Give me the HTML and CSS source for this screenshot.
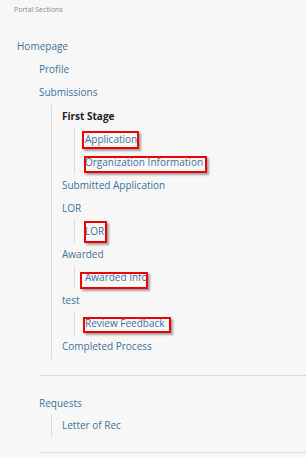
FILE: index.html
```html
<!DOCTYPE html>
<html lang="en">
<head>
    <meta charset="UTF-8">
    <meta name="viewport" content="width=device-width, initial-scale=1.0">
    <title>Portal Sections</title>
    <link rel="stylesheet" href="styles.css">
</head>
<body>
    <div class="sidebar">
        <div class="sidebar-title">Portal Sections</div>
        <ul class="nav">
            <li>
                <a href="#">Homepage</a>
                <ul class="nav-children">
                    <li><a href="#">Profile</a></li>
                    <li>
                        <a href="#">Submissions</a>
                        <ul class="nav-sub nav-sub-main">
                            <li>
                                <span class="nav-heading">First Stage</span>
                                <ul class="nav-sub">
                                    <li><a href="#" class="marked">Application<span class="mark mark-app"></span></a></li>
                                    <li><a href="#" class="marked">Organization Information<span class="mark mark-org"></span></a></li>
                                </ul>
                            </li>
                            <li><a href="#">Submitted Application</a></li>
                            <li>
                                <a href="#">LOR</a>
                                <ul class="nav-sub">
                                    <li><a href="#" class="marked">LOR<span class="mark mark-lor"></span></a></li>
                                </ul>
                            </li>
                            <li>
                                <a href="#">Awarded</a>
                                <ul class="nav-sub">
                                    <li><a href="#" class="marked">Awarded Info<span class="mark mark-awarded"></span></a></li>
                                </ul>
                            </li>
                            <li>
                                <a href="#">test</a>
                                <ul class="nav-sub">
                                    <li><a href="#" class="marked">Review Feedback<span class="mark mark-review"></span></a></li>
                                </ul>
                            </li>
                            <li><a href="#">Completed Process</a></li>
                        </ul>
                    </li>
                    <li class="divider"></li>
                    <li>
                        <a href="#">Requests</a>
                        <ul class="nav-sub nav-sub-requests">
                            <li><a href="#">Letter of Rec</a></li>
                        </ul>
                    </li>
                    <li class="divider divider-last"></li>
                </ul>
            </li>
        </ul>
    </div>
</body>
</html>
```

FILE: styles.css
```css
* {
    margin: 0;
    padding: 0;
    box-sizing: border-box;
}

body {
    background-color: #f7f7f7;
    font-family: "Open Sans", Arial, sans-serif;
    font-size: 10px;
    color: #41729c;
}

.sidebar {
    padding-top: 4px;
}

.sidebar-title {
    padding-left: 14px;
    font-size: 7px;
    line-height: 12px;
    color: #8a8a8a;
    height: 31px;
}

ul {
    list-style: none;
}

.nav {
    padding-left: 17px;
}

.nav a,
.nav-heading {
    display: inline-block;
    line-height: 23px;
    color: #41729c;
    text-decoration: none;
}

.nav-heading {
    font-weight: bold;
    color: #222;
}

.nav-children {
    padding-left: 22px;
}

.nav-sub {
    margin-left: 12px;
    padding-left: 10px;
    border-left: 1px solid #dcdcdc;
}

.nav-sub-main {
    margin-top: 1px;
    padding-bottom: 1px;
}

.nav-sub-requests {
    margin-top: -1px;
}

.divider {
    height: 1px;
    background-color: #dadada;
    margin: 16px 0 16px 0;
}

.divider-last {
    margin: 15px 0 0 0;
}

/* red annotation boxes */
.marked {
    position: relative;
}

.mark {
    position: absolute;
    border: 2px solid #ee0000;
    box-shadow: 2px 2px 2px rgba(0, 0, 0, 0.35);
}

.mark-app {
    left: -3px;
    top: 3px;
    width: 57px;
    height: 18px;
}

.mark-org {
    left: -1px;
    top: 5px;
    width: 123px;
    height: 17px;
}

.mark-lor {
    left: -1px;
    top: 1px;
    width: 23px;
    height: 22px;
}

.mark-awarded {
    left: -5px;
    top: 6px;
    width: 68px;
    height: 17px;
}

.mark-review {
    left: -2px;
    top: 5px;
    width: 88px;
    height: 16px;
}
```
